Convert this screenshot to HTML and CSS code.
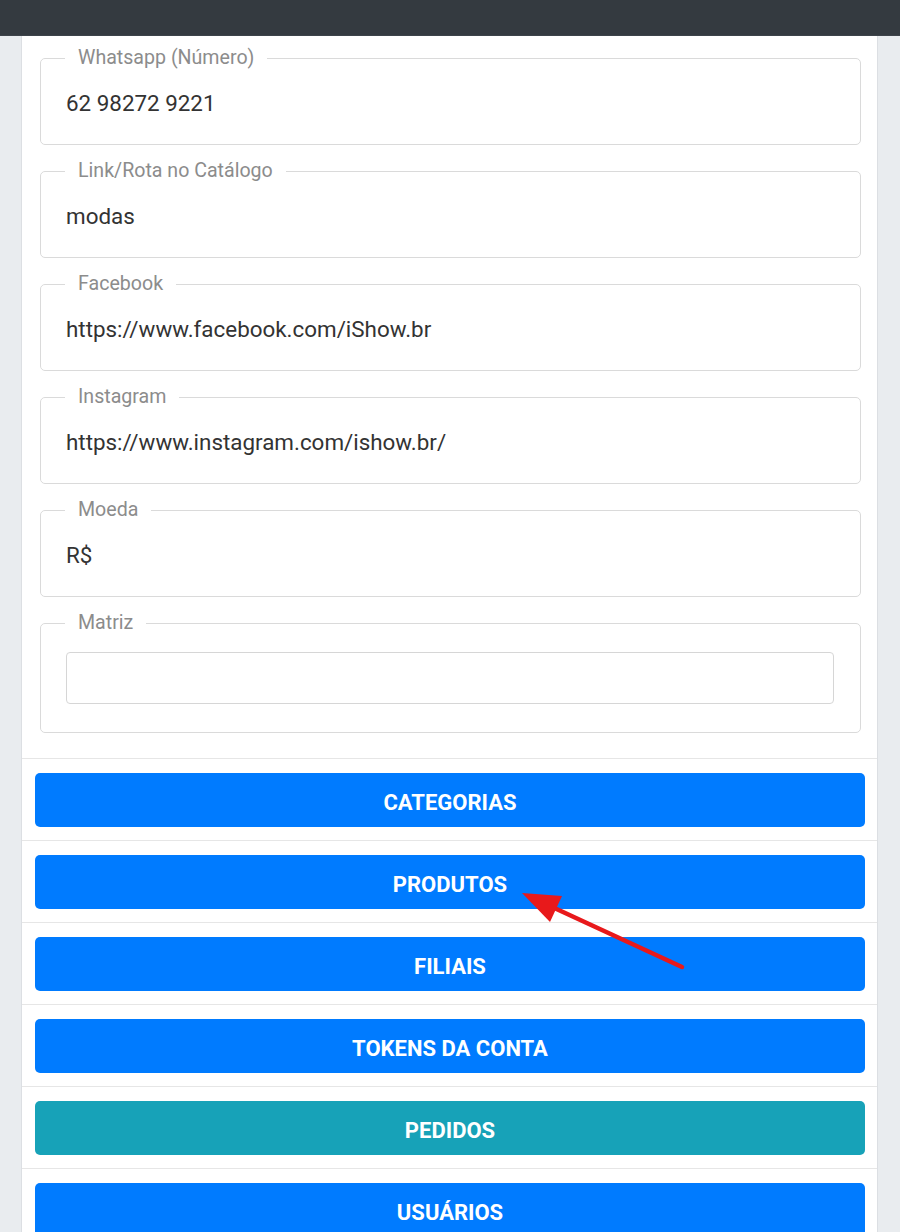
FILE: index.html
```html
<!DOCTYPE html>
<html lang="pt-BR">
<head>
<meta charset="utf-8">
<title>Configurações</title>
<link rel="stylesheet" href="styles.css">
</head>
<body>
<div class="topbar"></div>
<div class="panel">
  <div class="form">
    <fieldset class="field">
      <legend>Whatsapp (Número)</legend>
      <div class="value">62 98272 9221</div>
    </fieldset>
    <fieldset class="field">
      <legend>Link/Rota no Catálogo</legend>
      <div class="value">modas</div>
    </fieldset>
    <fieldset class="field">
      <legend>Facebook</legend>
      <div class="value">https://www.facebook.com/iShow.br</div>
    </fieldset>
    <fieldset class="field">
      <legend>Instagram</legend>
      <div class="value">https://www.instagram.com/ishow.br/</div>
    </fieldset>
    <fieldset class="field">
      <legend>Moeda</legend>
      <div class="value">R$</div>
    </fieldset>
    <fieldset class="field field-last">
      <legend>Matriz</legend>
      <div class="input-wrap"><input class="input" type="text"></div>
    </fieldset>
  </div>
  <div class="row"><button class="btn">CATEGORIAS</button></div>
  <div class="row"><button class="btn">PRODUTOS</button></div>
  <div class="row"><button class="btn">FILIAIS</button></div>
  <div class="row"><button class="btn">TOKENS DA CONTA</button></div>
  <div class="row"><button class="btn btn-info">PEDIDOS</button></div>
  <div class="row"><button class="btn">USUÁRIOS</button></div>
</div>
<svg class="arrow" width="180" height="95" viewBox="510 880 180 95">
  <line x1="682" y1="967" x2="550" y2="906" stroke="#e8191b" stroke-width="4.5" stroke-linecap="round"/>
  <polygon points="522,893 562,896 550,922" fill="#e8191b"/>
</svg>
</body>
</html>
```
FILE: styles.css
```css
* { box-sizing: border-box; }
html, body { margin: 0; padding: 0; }
body {
  position: relative;
  background: #e9ecef;
  font-family: Roboto, "Liberation Sans", Arial, sans-serif;
  color: #333;
}
.topbar {
  height: 36px;
  background: #343a40;
  border-bottom: 1px solid #3d434a;
}
.panel {
  margin: 0 22px 0 21px;
  background: #fff;
  border-left: 1px solid #dcdfe3;
  border-right: 1px solid #dcdfe3;
  padding-bottom: 40px;
}
.form {
  padding: 10px 16px 25px 18px;
}
.field {
  margin: 0 0 14px;
  padding: 0 24px 0 25px;
  border: 1px solid #dadada;
  border-radius: 5px;
  min-width: 0;
}
.field-last { margin-bottom: 0; padding-right: 26px; }
.field legend {
  margin-left: -1px;
  padding: 0 13px;
  font-size: 19.6px;
  line-height: 24px;
  color: #8c8c8c;
}
.value {
  padding: 17px 0 25px 0;
  font-size: 22.4px;
  line-height: 32px;
  color: #333;
}
.input-wrap {
  padding: 17px 0 28px;
}
.input {
  display: block;
  width: 100%;
  height: 52px;
  border: 1px solid #d6d6d6;
  border-radius: 4px;
  background: #fff;
  margin: 0;
}
.row {
  border-top: 1px solid #e6e6e6;
  padding: 14px 12px 13px 13px;
}
.btn {
  display: block;
  width: 100%;
  height: 54px;
  border: 0;
  border-radius: 5px;
  background: #007bff;
  color: #fff;
  font-family: Roboto, "Liberation Sans", Arial, sans-serif;
  font-weight: 700;
  font-size: 22px;
  padding: 4px 0 0;
  margin: 0;
}
.btn-info { background: #17a2b8; }
.arrow {
  position: absolute;
  left: 510px;
  top: 880px;
}
```
